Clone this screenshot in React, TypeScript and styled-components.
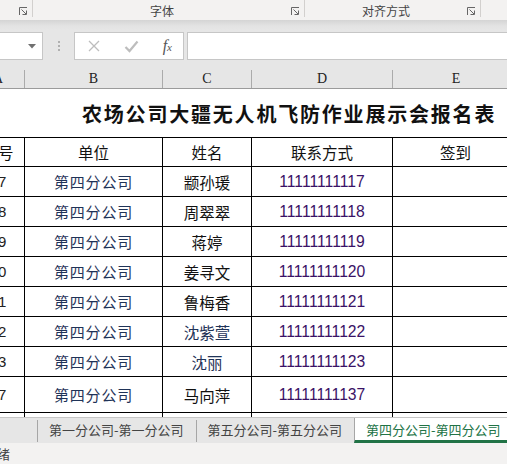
import React from "react";
import styled, { createGlobalStyle } from "styled-components";

const GlobalStyle = createGlobalStyle`
  html, body {
    margin: 0;
    padding: 0;
    height: 464px;
    overflow: hidden;
    background: #fff;
    font-family: "Noto Sans CJK SC", "Liberation Sans", sans-serif;
  }
`;

const CJK = `"Noto Sans CJK SC", "Liberation Sans", sans-serif`;

type Row = { no: string; unit: string; name: string; phone: string; tall?: boolean; navy?: boolean };

const rows: Row[] = [
  { no: "17", unit: "第四分公司", name: "颛孙瑗", phone: "11111111117" },
  { no: "18", unit: "第四分公司", name: "周翠翠", phone: "11111111118" },
  { no: "19", unit: "第四分公司", name: "蒋婷", phone: "11111111119" },
  { no: "20", unit: "第四分公司", name: "姜寻文", phone: "11111111120" },
  { no: "21", unit: "第四分公司", name: "鲁梅香", phone: "11111111121" },
  { no: "22", unit: "第四分公司", name: "沈紫萱", phone: "11111111122", navy: true },
  { no: "23", unit: "第四分公司", name: "沈丽", phone: "11111111123", navy: true },
  { no: "37", unit: "第四分公司", name: "马向萍", phone: "11111111137", tall: true },
];

const Launcher: React.FC = () => (
  <LauncherIcon width="9" height="9" viewBox="0 0 9 9">
    <path d="M0.5 8V0.5H8" fill="none" stroke="#666" strokeWidth="1" />
    <path d="M2.5 2.5L7 7M7.5 3.5V7.5H3.5" fill="none" stroke="#666" strokeWidth="1" />
  </LauncherIcon>
);

const App: React.FC = () => {
  return (
    <Page>
      <GlobalStyle />
      <Ribbon>
        <RibbonGroup $width={33}>
          <GroupLabel />
          <Launcher />
        </RibbonGroup>
        <RibbonGroup $width={272}>
          <GroupLabel>字体</GroupLabel>
          <Launcher />
        </RibbonGroup>
        <RibbonGroup $width={176}>
          <GroupLabel>对齐方式</GroupLabel>
          <Launcher />
        </RibbonGroup>
        <RibbonGroup $width={26} $last />
      </Ribbon>

      <FormulaArea>
        <NameBox>
          <svg width="8" height="5" viewBox="0 0 8 5">
            <path d="M0 0H8L4 4.5Z" fill="#707070" />
          </svg>
        </NameBox>
        <Dots>
          <Dot />
          <Dot />
          <Dot />
        </Dots>
        <FormulaButtons>
          <svg width="12" height="12" viewBox="0 0 12 12">
            <path d="M1 1L11 11M11 1L1 11" stroke="#bdbdbd" strokeWidth="1.3" />
          </svg>
          <svg width="15" height="13" viewBox="0 0 15 13">
            <path d="M1.5 7L5.5 11L13.5 1.5" fill="none" stroke="#bdbdbd" strokeWidth="2.2" />
          </svg>
          <Fx>
            f<sub>x</sub>
          </Fx>
        </FormulaButtons>
        <FormulaInput />
      </FormulaArea>

      <ColumnHeaders>
        <ColumnLetter>A</ColumnLetter>
        <ColumnLetter>B</ColumnLetter>
        <ColumnLetter>C</ColumnLetter>
        <ColumnLetter>D</ColumnLetter>
        <ColumnLetter $last>E</ColumnLetter>
      </ColumnHeaders>

      <Sheet>
        <Grid>
          <TitleCell>农场公司大疆无人机飞防作业展示会报名表</TitleCell>

          <HeadCell>序号</HeadCell>
          <HeadCell>单位</HeadCell>
          <HeadCell>姓名</HeadCell>
          <HeadCell>联系方式</HeadCell>
          <HeadCell>签到</HeadCell>

          {rows.map((r) => (
            <React.Fragment key={r.no}>
              <DataCell $tall={r.tall}>
                <NumberText>{r.no}</NumberText>
              </DataCell>
              <DataCell $tall={r.tall}>
                <UnitText>{r.unit}</UnitText>
              </DataCell>
              <DataCell $tall={r.tall}>
                <NameText $navy={r.navy}>{r.name}</NameText>
              </DataCell>
              <DataCell $tall={r.tall}>
                <PhoneText>{r.phone}</PhoneText>
              </DataCell>
              <DataCell $tall={r.tall} />
            </React.Fragment>
          ))}

          <StubCell />
          <StubCell />
          <StubCell />
          <StubCell />
          <StubCell />
        </Grid>
      </Sheet>

      <TabBar>
        <TabNav />
        <TabSeparator />
        <Tab>第一分公司-第一分公司</Tab>
        <TabSeparator />
        <Tab>第五分公司-第五分公司</Tab>
        <Tab $active>第四分公司-第四分公司</Tab>
      </TabBar>

      <StatusBar>
        <StatusText>就绪</StatusText>
      </StatusBar>
    </Page>
  );
};

export default App;

const Page = styled.div`
  width: 507px;
  height: 464px;
  overflow: hidden;
  display: flex;
  flex-direction: column;
`;

const Ribbon = styled.div`
  height: 20px;
  flex-shrink: 0;
  background: #f3f2f1;
  display: flex;
  align-items: flex-start;
  overflow: hidden;
`;

const RibbonGroup = styled.div<{ $width: number; $last?: boolean }>`
  width: ${(p) => p.$width}px;
  flex-shrink: 0;
  height: 17px;
  box-sizing: border-box;
  display: flex;
  align-items: flex-end;
  padding-right: 3px;
  border-right: ${(p) => (p.$last ? "none" : "1px solid #d2d0ce")};
`;

const GroupLabel = styled.div`
  flex: 1;
  text-align: center;
  font-family: ${CJK};
  font-size: 12px;
  line-height: 15px;
  color: #444;
  align-self: center;
  padding-top: 3px;
`;

const LauncherIcon = styled.svg`
  margin-bottom: 1px;
  margin-right: 1px;
`;

const FormulaArea = styled.div`
  height: 48px;
  flex-shrink: 0;
  box-sizing: border-box;
  background: linear-gradient(#d4d4d4 0px, #e3e3e3 6px, #e6e6e6 10px);
  padding: 12px 0 8px 0;
  display: flex;
  align-items: stretch;
`;

const NameBox = styled.div`
  width: 43px;
  box-sizing: border-box;
  background: #fff;
  border: 1px solid #c6c6c6;
  border-left: none;
  display: flex;
  align-items: center;
  justify-content: flex-end;
  padding-right: 6px;
`;

const Dots = styled.div`
  width: 31px;
  display: flex;
  flex-direction: column;
  align-items: center;
  justify-content: center;
  gap: 2px;
`;

const Dot = styled.span`
  width: 2px;
  height: 2px;
  background: #b0b0b0;
`;

const FormulaButtons = styled.div`
  width: 110px;
  box-sizing: border-box;
  background: #fff;
  border: 1px solid #c6c6c6;
  display: flex;
  align-items: center;
  justify-content: space-between;
  padding: 0 11px 0 13px;
`;

const Fx = styled.span`
  font-family: "Liberation Serif", serif;
  font-style: italic;
  font-size: 16px;
  color: #555;
  line-height: 1;

  sub {
    font-size: 11px;
    vertical-align: 0;
  }
`;

const FormulaInput = styled.div`
  flex: 1;
  margin-left: 3px;
  background: #fff;
  border: 1px solid #c6c6c6;
  border-right: none;
`;

const COLS = "53px 138px 89px 141px 126px";

const ColumnHeaders = styled.div`
  height: 21px;
  flex-shrink: 0;
  box-sizing: border-box;
  background: #e6e6e6;
  border-bottom: 1px solid #9b9b9b;
  display: grid;
  grid-template-columns: ${COLS};
  margin-left: -28px;
  width: 547px;
  padding-top: 2px;
`;

const ColumnLetter = styled.div<{ $last?: boolean }>`
  box-sizing: border-box;
  border-right: ${(p) => (p.$last ? "none" : "1px solid #ababab")};
  display: flex;
  align-items: center;
  justify-content: center;
  font-family: "Liberation Serif", serif;
  font-size: 14px;
  color: #222;
`;

const Sheet = styled.div`
  height: 328px;
  flex-shrink: 0;
  overflow: hidden;
  background: #fff;
`;

const Grid = styled.div`
  display: grid;
  grid-template-columns: ${COLS};
  margin-left: -28px;
  width: 547px;
`;

const TitleCell = styled.div`
  grid-column: 1 / -1;
  height: 49px;
  box-sizing: border-box;
  border-bottom: 1px solid #000;
  display: flex;
  align-items: center;
  padding-left: 110px;
  font-family: ${CJK};
  font-weight: 700;
  font-size: 20px;
  letter-spacing: 1.8px;
  color: #111;
  white-space: nowrap;
`;

const BaseCell = styled.div`
  box-sizing: border-box;
  border-right: 1px solid #000;
  border-bottom: 1px solid #000;
  display: flex;
  align-items: center;
  justify-content: center;
  overflow: hidden;
  white-space: nowrap;
`;

const HeadCell = styled(BaseCell)`
  height: 29px;
  font-family: ${CJK};
  font-size: 15.5px;
  color: #111;
`;

const DataCell = styled(BaseCell)<{ $tall?: boolean }>`
  height: ${(p) => (p.$tall ? 36 : 30)}px;
`;

const StubCell = styled(BaseCell)`
  height: 4px;
  border-bottom: none;
`;

const NumberText = styled.span`
  font-family: "Liberation Sans", sans-serif;
  font-size: 15px;
  color: #222;
`;

const UnitText = styled.span`
  font-family: ${CJK};
  font-size: 15px;
  letter-spacing: 0.8px;
  color: #1f3358;
`;

const NameText = styled.span<{ $navy?: boolean }>`
  font-family: ${CJK};
  font-size: 15.5px;
  color: ${(p) => (p.$navy ? "#1f3358" : "#111")};
`;

const PhoneText = styled.span`
  font-family: "Liberation Sans", sans-serif;
  font-size: 15.7px;
  color: #3a1266;
`;

const TabBar = styled.div`
  height: 26px;
  flex-shrink: 0;
  box-sizing: border-box;
  background: #e6e6e6;
  border-top: 1px solid #c6c6c6;
  display: flex;
  align-items: stretch;
  overflow: hidden;
  white-space: nowrap;
`;

const TabNav = styled.div`
  width: 37px;
  flex-shrink: 0;
`;

const TabSeparator = styled.div`
  width: 1px;
  flex-shrink: 0;
  background: #a6a6a6;
  margin: 2px 0 1px;
`;

const Tab = styled.div<{ $active?: boolean }>`
  flex-shrink: 0;
  box-sizing: border-box;
  padding: 0 12px 0 11px;
  display: flex;
  align-items: center;
  font-family: ${CJK};
  font-size: 13px;
  color: ${(p) => (p.$active ? "#217346" : "#444")};
  background: ${(p) => (p.$active ? "#fff" : "transparent")};
  border-left: ${(p) => (p.$active ? "1px solid #a6a6a6" : "none")};
  border-bottom: 3px solid ${(p) => (p.$active ? "#217346" : "transparent")};
`;

const StatusBar = styled.div`
  flex: 1;
  background: #f3f2f1;
  display: flex;
  align-items: center;
  overflow: hidden;
`;

const StatusText = styled.span`
  margin-left: -16px;
  font-family: ${CJK};
  font-size: 13px;
  color: #444;
`;
